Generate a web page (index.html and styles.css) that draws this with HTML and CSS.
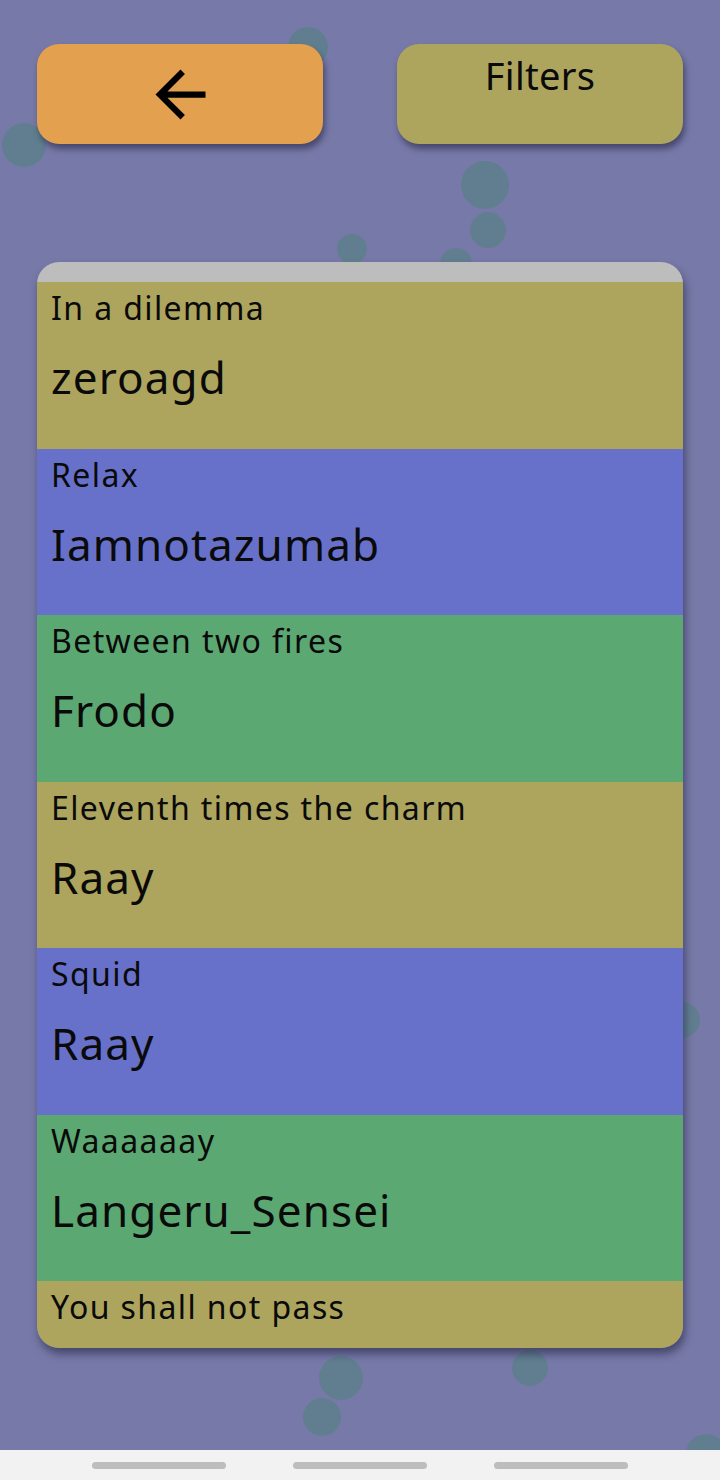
FILE: index.html
```html
<!DOCTYPE html>
<html lang="en">
<head>
<meta charset="utf-8">
<title>Threads</title>
<link rel="stylesheet" href="styles.css">
</head>
<body>
<div class="screen">
  <div class="bubbles" aria-hidden="true">
    <span class="bubble" style="left:288px;top:27px;width:40px;height:40px"></span>
    <span class="bubble" style="left:2px;top:123px;width:44px;height:44px"></span>
    <span class="bubble" style="left:461px;top:161px;width:48px;height:48px"></span>
    <span class="bubble" style="left:470px;top:212px;width:36px;height:36px"></span>
    <span class="bubble" style="left:337px;top:234px;width:30px;height:30px"></span>
    <span class="bubble" style="left:440px;top:248px;width:32px;height:32px"></span>
    <span class="bubble" style="left:664px;top:1002px;width:36px;height:36px"></span>
    <span class="bubble" style="left:319px;top:1356px;width:44px;height:44px"></span>
    <span class="bubble" style="left:303px;top:1398px;width:38px;height:38px"></span>
    <span class="bubble" style="left:512px;top:1350px;width:36px;height:36px"></span>
    <span class="bubble" style="left:686px;top:1434px;width:40px;height:40px"></span>
  </div>

  <div class="content">
    <div class="toolbar">
      <button class="btn btn-back" aria-label="Back">
        <svg class="arrow" viewBox="0 0 24 24" width="75" height="75"><path d="M20 11H7.83l5.59-5.59L12 4l-8 8 8 8 1.41-1.41L7.83 13H20v-2z"/></svg>
      </button>
      <button class="btn btn-filters">Filters</button>
    </div>

    <div class="card">
      <div class="card-top"></div>
      <div class="row olive"><div class="label">In a dilemma</div><div class="name">zeroagd</div></div>
      <div class="row blue"><div class="label">Relax</div><div class="name">Iamnotazumab</div></div>
      <div class="row green"><div class="label">Between two fires</div><div class="name">Frodo</div></div>
      <div class="row olive"><div class="label">Eleventh times the charm</div><div class="name">Raay</div></div>
      <div class="row blue"><div class="label">Squid</div><div class="name">Raay</div></div>
      <div class="row green"><div class="label">Waaaaaay</div><div class="name">Langeru_Sensei</div></div>
      <div class="row olive last"><div class="label">You shall not pass</div></div>
    </div>
  </div>
</div>
<nav class="navbar">
  <span class="pill"></span>
  <span class="pill"></span>
  <span class="pill"></span>
</nav>
</body>
</html>
```

FILE: styles.css
```css
* { box-sizing: border-box; }

html, body {
  margin: 0;
  padding: 0;
}

body {
  width: 720px;
  height: 1480px;
  overflow: hidden;
  font-family: "Noto Sans", "Open Sans", sans-serif;
  color: #0a0a0a;
  background: #777aa8;
}

.screen {
  position: relative;
  height: 1450px;
  background: #777aa8;
  overflow: hidden;
}

.bubbles {
  position: absolute;
  inset: 0;
  z-index: 0;
}

.bubble {
  position: absolute;
  border-radius: 50%;
  background: #5d7f8c;
  opacity: 0.85;
}

.content {
  position: relative;
  z-index: 1;
  padding: 44px 37px 0 37px;
  display: flex;
  flex-direction: column;
  gap: 118px;
}

.toolbar {
  display: flex;
  justify-content: space-between;
}

.btn {
  width: 286px;
  height: 100px;
  border: none;
  border-radius: 22px;
  box-shadow: 2px 5px 6px rgba(30, 30, 60, 0.55);
  font-family: "Noto Sans", "Open Sans", sans-serif;
  color: #0a0a0a;
  padding: 0;
  cursor: pointer;
}

.btn-back {
  background: #e3a04f;
  display: flex;
  align-items: center;
  justify-content: center;
}

.arrow path { fill: #000; }

.btn-filters {
  background: #ada55e;
  font-size: 38px;
  line-height: 52px;
  letter-spacing: 0.3px;
  display: flex;
  justify-content: center;
  align-items: flex-start;
  padding-top: 5px;
}

.card {
  height: 1086px;
  border-radius: 22px;
  overflow: hidden;
  box-shadow: 2px 6px 8px rgba(30, 30, 60, 0.55);
  display: flex;
  flex-direction: column;
}

.card-top {
  height: 20px;
  flex: none;
  background: #bdbdbd;
}

.row {
  height: 166.5px;
  flex: none;
  padding: 4px 14px 0 14px;
  display: flex;
  flex-direction: column;
  gap: 18px;
}

.row.last {
  height: 67px;
}

.olive { background: #ada55d; }
.blue { background: #6771c9; }
.green { background: #5ba872; }

.label {
  font-size: 32px;
  line-height: 43px;
  letter-spacing: 1.4px;
}

.name {
  font-size: 44px;
  line-height: 60px;
  letter-spacing: 1.1px;
}

.navbar {
  height: 30px;
  background: #f2f2f2;
  display: flex;
  align-items: center;
  gap: 67px;
  padding-left: 92px;
}

.pill {
  width: 134px;
  height: 7px;
  border-radius: 4px;
  background: #bdbdbd;
}
```
